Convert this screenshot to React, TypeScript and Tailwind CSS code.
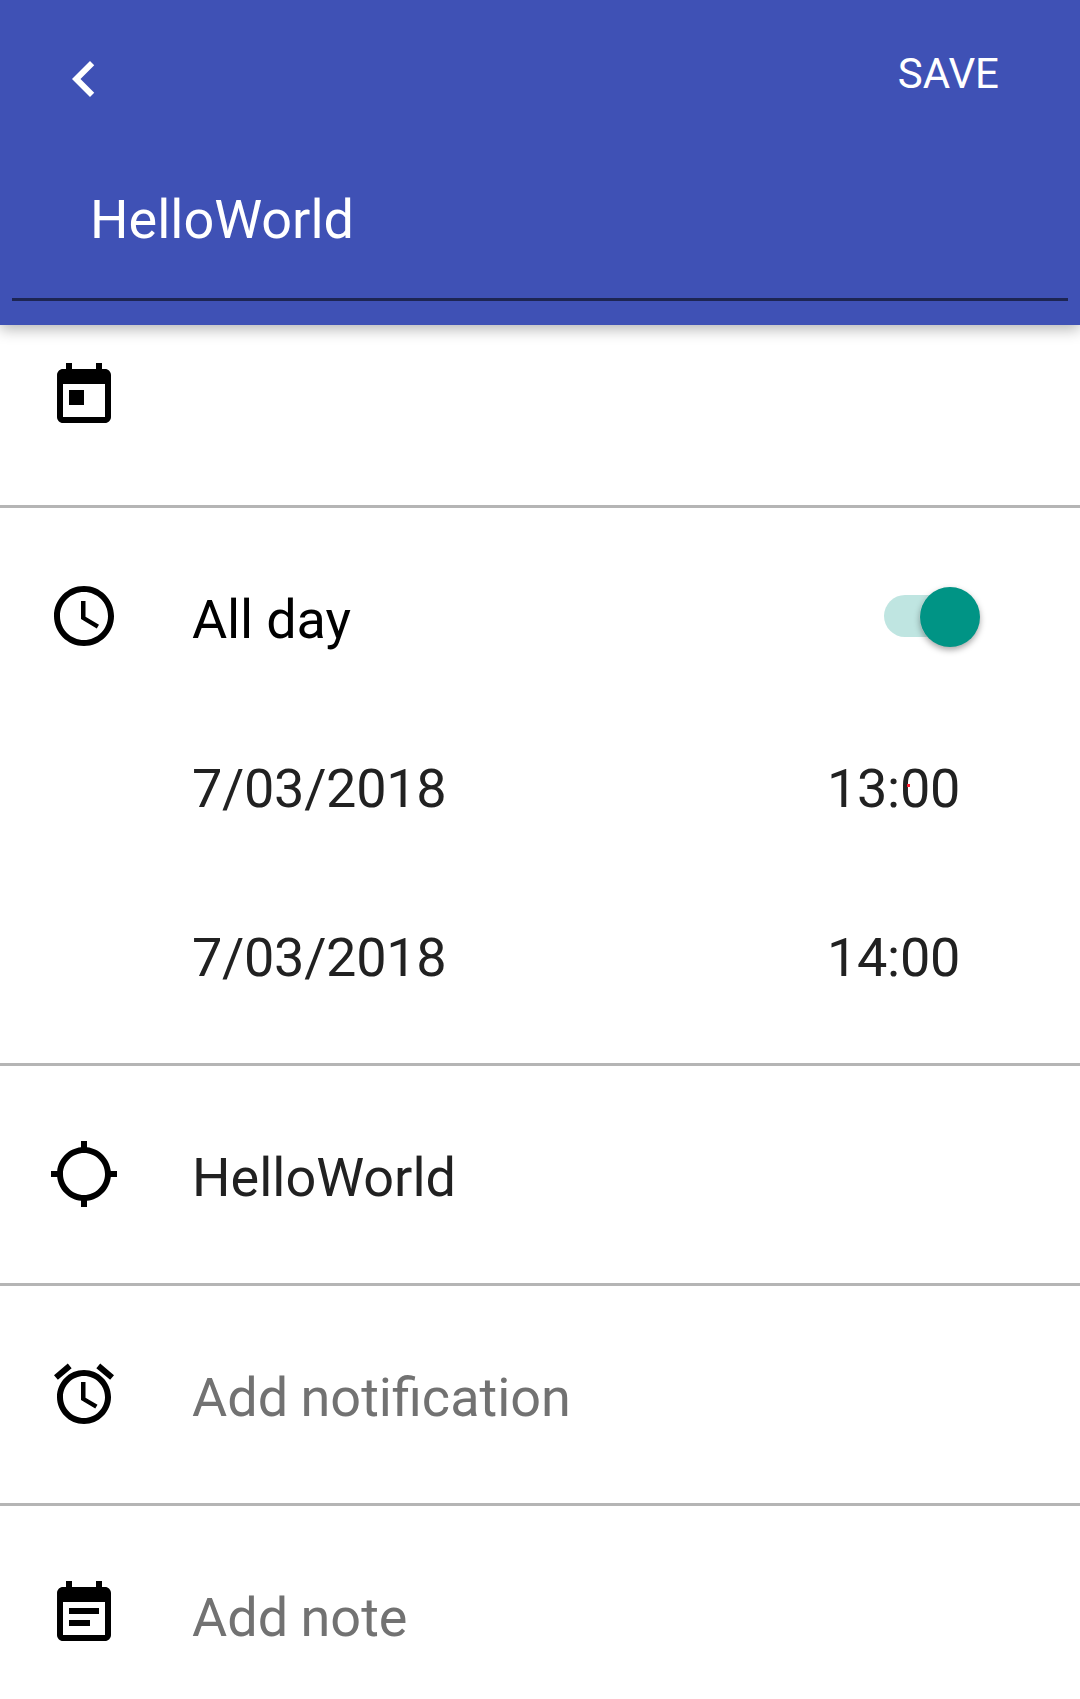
import React from "react";

function Icon({ d, className }: { d: string; className: string }) {
  return (
    <svg viewBox="0 0 24 24" className={className} fill="currentColor">
      <path d={d} />
    </svg>
  );
}

const icons = {
  back: "M15.41 7.41L14 6l-6 6 6 6 1.41-1.41L10.83 12z",
  today: "M19 3h-1V1h-2v2H8V1H6v2H5c-1.11 0-1.99.9-1.99 2L3 19c0 1.1.89 2 2 2h14c1.1 0 2-.9 2-2V5c0-1.1-.9-2-2-2zm0 16H5V8h14v11zM7 10h5v5H7z",
  clock: "M11.99 2C6.47 2 2 6.48 2 12s4.47 10 9.99 10C17.52 22 22 17.52 22 12S17.52 2 11.99 2zM12 20c-4.42 0-8-3.58-8-8s3.58-8 8-8 8 3.58 8 8-3.58 8-8 8zm.5-13H11v6l5.25 3.15.75-1.23-4.5-2.67z",
  location: "M20.94 11c-.46-4.17-3.77-7.48-7.94-7.94V1h-2v2.06C6.83 3.52 3.52 6.83 3.06 11H1v2h2.06c.46 4.17 3.77 7.48 7.94 7.94V23h2v-2.06c4.17-.46 7.48-3.77 7.94-7.94H23v-2h-2.06zM12 19c-3.87 0-7-3.13-7-7s3.13-7 7-7 7 3.13 7 7-3.13 7-7 7z",
  alarm: "M22 5.72l-4.6-3.86-1.29 1.53 4.6 3.86L22 5.72zM7.88 3.39L6.6 1.86 2 5.71l1.29 1.53 4.59-3.85zM12.5 8H11v6l4.75 2.85.75-1.23-4-2.37V8zM12 4c-4.97 0-9 4.03-9 9s4.02 9 9 9c4.97 0 9-4.03 9-9s-4.03-9-9-9zm0 16c-3.87 0-7-3.13-7-7s3.13-7 7-7 7 3.13 7 7-3.13 7-7 7z",
  note: "M17 10H7v2h10v-2zm2-7h-1V1h-2v2H8V1H6v2H5c-1.11 0-1.99.9-1.99 2L3 19c0 1.1.89 2 2 2h14c1.1 0 2-.9 2-2V5c0-1.1-.9-2-2-2zm0 16H5V8h14v11zm-5-5H7v2h7v-2z",
};

function Row({ icon, label, muted }: { icon: string; label: string; muted?: boolean }) {
  return (
    <section className="flex h-[220px] shrink-0 items-start border-b-[3px] border-[#b5b5b5] pl-12 pt-[72px]">
      <Icon d={icon} className="size-[72px] shrink-0" />
      <span className={muted ? "ml-[72px] pt-2 text-[54px] leading-[64px] [word-spacing:-1px] text-[#727272]" : "ml-[72px] pt-2 text-[54px] leading-[64px] text-[#212121]"}>{label}</span>
    </section>
  );
}

function DateTime({ date, time, marked }: { date: string; time: string; marked?: boolean }) {
  return (
    <div className="flex h-[169px] justify-between pl-48 pr-[120px] text-[54px] leading-[64px] tracking-[-0.3px] text-[#212121]">
      <span>{date}</span>
      <span className="relative">
        {time}
        {marked && <i className="absolute right-[50px] top-[27px] size-[3px] bg-[#ff1e32]" />}
      </span>
    </div>
  );
}

export default function App() {
  return (
    <main className="flex h-[1699px] w-[1080px] flex-col overflow-hidden bg-white font-[Roboto,sans-serif] text-black">
      <header className="relative z-10 flex h-[325px] shrink-0 flex-col bg-[#3f51b5] text-white shadow-[0_4px_14px_rgba(0,0,0,0.3)]">
        <div className="flex h-[188px] items-start justify-between pl-12 pr-[81px] pt-[43px]">
          <Icon d={icons.back} className="size-[72px]" />
          <button className="pt-[6px] text-[42px] leading-[50px]">SAVE</button>
        </div>
        <div className="mx-3 h-[113px] border-b-[3px] border-[#1d2553] pl-[78px] text-[54px] leading-[64px]">HelloWorld</div>
      </header>
      <section className="h-[183px] shrink-0 border-b-[3px] border-[#b5b5b5] pl-12 pt-[35px]">
        <Icon d={icons.today} className="size-[72px]" />
      </section>
      <section className="h-[558px] shrink-0 border-b-[3px] border-[#b5b5b5]">
        <div className="flex h-[249px] items-start pl-12 pt-[72px]">
          <Icon d={icons.clock} className="size-[72px]" />
          <span className="ml-[72px] pt-2 text-[54px] leading-[64px] tracking-[-0.15px]">All day</span>
          <div className="ml-auto mr-[100px] mt-1.5 flex h-[60px] w-24 items-center">
            <div className="h-[42px] w-[70px] shrink-0 rounded-full bg-[#bfe5e1]" />
            <div className="-ml-[34.5px] mt-px size-[60px] shrink-0 rounded-full bg-[#009485] shadow-[0_3px_6px_rgba(0,0,0,0.35),0_0_0_0.5px_rgba(255,255,255,0.5)]" />
          </div>
        </div>
        <DateTime date="7/03/2018" time="13:00" marked />
        <DateTime date="7/03/2018" time="14:00" />
      </section>
      <Row icon={icons.location} label="HelloWorld" />
      <Row icon={icons.alarm} label="Add notification" muted />
      <Row icon={icons.note} label="Add note" muted />
    </main>
  );
}
